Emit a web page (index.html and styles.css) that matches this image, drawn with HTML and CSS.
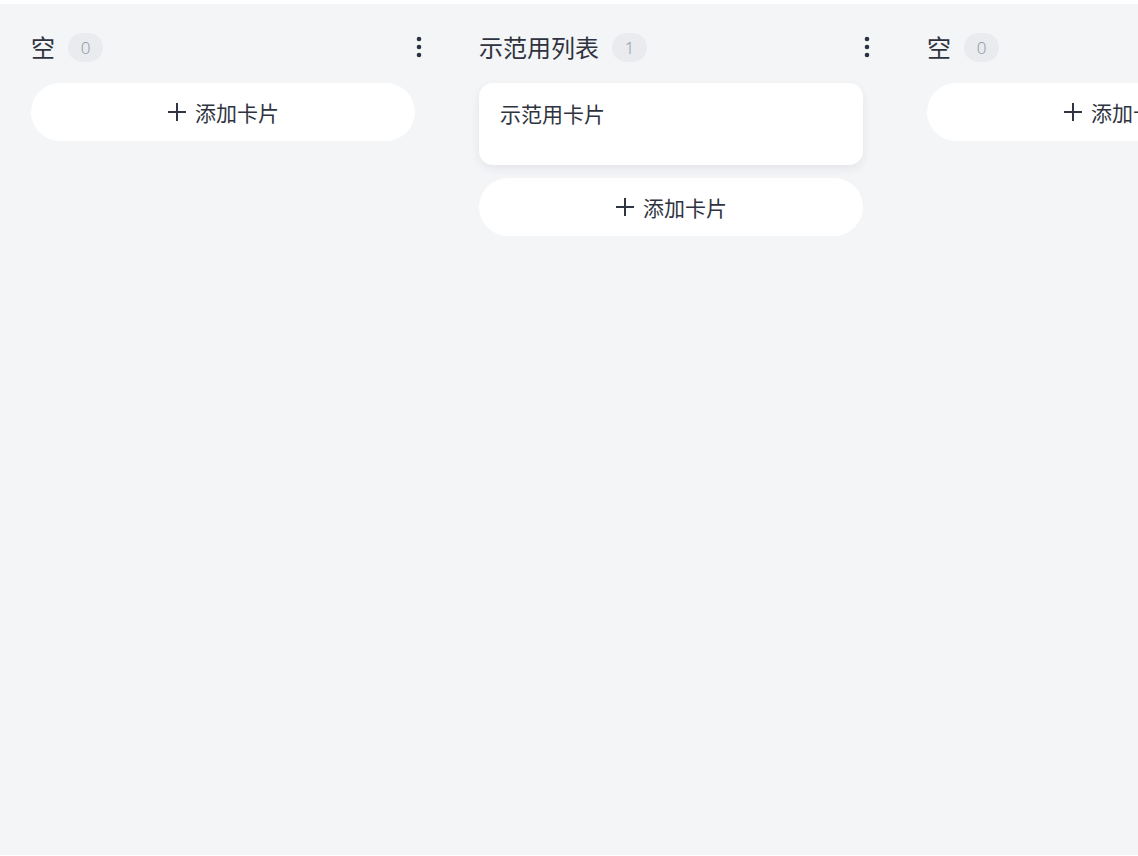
FILE: index.html
```html
<!DOCTYPE html>
<html lang="zh-CN">
<head>
  <meta charset="UTF-8">
  <meta name="viewport" content="width=device-width, initial-scale=1.0">
  <title>看板</title>
  <link rel="stylesheet" href="styles.css">
</head>
<body>

  <div class="board">

    <div class="column">
      <div class="column-header">
        <span class="column-title">空</span>
        <span class="count">0</span>
        <button class="menu-btn" aria-label="更多">
          <svg width="6" height="22" viewBox="0 0 6 22"><circle cx="3" cy="3" r="2.3"/><circle cx="3" cy="11" r="2.3"/><circle cx="3" cy="19" r="2.3"/></svg>
        </button>
      </div>
      <button class="add-card">
        <svg width="20" height="20" viewBox="0 0 20 20"><path d="M10 1v18M1 10h18"/></svg>
        添加卡片
      </button>
    </div>

    <div class="column">
      <div class="column-header">
        <span class="column-title">示范用列表</span>
        <span class="count">1</span>
        <button class="menu-btn" aria-label="更多">
          <svg width="6" height="22" viewBox="0 0 6 22"><circle cx="3" cy="3" r="2.3"/><circle cx="3" cy="11" r="2.3"/><circle cx="3" cy="19" r="2.3"/></svg>
        </button>
      </div>
      <div class="card">示范用卡片</div>
      <button class="add-card">
        <svg width="20" height="20" viewBox="0 0 20 20"><path d="M10 1v18M1 10h18"/></svg>
        添加卡片
      </button>
    </div>

    <div class="column">
      <div class="column-header">
        <span class="column-title">空</span>
        <span class="count">0</span>
        <button class="menu-btn" aria-label="更多">
          <svg width="6" height="22" viewBox="0 0 6 22"><circle cx="3" cy="3" r="2.3"/><circle cx="3" cy="11" r="2.3"/><circle cx="3" cy="19" r="2.3"/></svg>
        </button>
      </div>
      <button class="add-card">
        <svg width="20" height="20" viewBox="0 0 20 20"><path d="M10 1v18M1 10h18"/></svg>
        添加卡片
      </button>
    </div>

  </div>

</body>
</html>
```

FILE: styles.css
```css
body {
  margin: 0;
  background-color: #ffffff;
  font-family: "Noto Sans CJK SC", "Noto Sans", sans-serif;
  color: #2f3340;
}
.board {
  margin-top: 4px;
  height: 851px;
  background-color: #f4f5f7;
  display: flex;
  gap: 64px;
  padding-left: 31px;
  overflow: hidden;
}
.column {
  width: 384px;
  flex-shrink: 0;
  padding-top: 24px;
}
.column-header {
  height: 38px;
  display: flex;
  align-items: center;
  margin-right: -16px;
  margin-bottom: 17px;
}
.column-title {
  font-size: 24px;
  line-height: 30px;
}
.count {
  margin-left: 13px;
  min-width: 35px;
  height: 29px;
  border-radius: 15px;
  background-color: #e9ebef;
  color: #8c919b;
  font-family: "Open Sans", sans-serif;
  font-size: 17px;
  font-weight: 300;
  display: flex;
  align-items: center;
  justify-content: center;
}
.menu-btn {
  margin-left: auto;
  width: 24px;
  height: 32px;
  border: none;
  background: none;
  padding: 0;
  display: flex;
  align-items: center;
  justify-content: center;
  cursor: pointer;
}
.menu-btn svg {
  fill: #2b3244;
}
.add-card {
  width: 100%;
  height: 58px;
  border: none;
  border-radius: 29px;
  background-color: #ffffff;
  font-family: inherit;
  font-size: 21px;
  color: #2f3340;
  display: flex;
  align-items: center;
  justify-content: center;
  gap: 8px;
  cursor: pointer;
}
.add-card svg {
  stroke: #2f3542;
  stroke-width: 2;
  fill: none;
}
.card {
  height: 82px;
  box-sizing: border-box;
  padding: 17px 21px;
  border-radius: 14px;
  background-color: #ffffff;
  box-shadow: 0 4px 10px rgba(30, 40, 70, 0.07);
  font-size: 21px;
  line-height: 26px;
  margin-bottom: 13px;
}
```
